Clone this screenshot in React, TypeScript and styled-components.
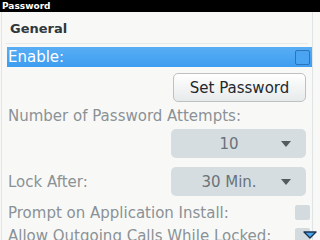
import React from 'react';
import styled, { createGlobalStyle } from 'styled-components';

const GlobalStyle = createGlobalStyle`
  html, body {
    margin: 0;
    padding: 0;
    background: #f8f9f7;
    font-family: "DejaVu Sans", "Noto Sans", sans-serif;
    overflow: hidden;
  }
`;

const Screen = styled.div`
  width: 320px;
  height: 240px;
  display: flex;
  flex-direction: column;
  position: relative;
  overflow: hidden;
`;

const TitleBar = styled.div`
  height: 12px;
  background: #000;
  color: #fff;
  font-weight: bold;
  font-size: 9px;
  line-height: 12px;
  padding-left: 2px;
`;

const Body = styled.div`
  flex: 1;
  display: flex;
`;

const Panel = styled.div`
  flex: 1;
  margin-left: 1px;
  border-left: 1px solid #dfe6e6;
  border-right: 1px solid #dfe4e4;
  display: flex;
  flex-direction: column;
`;

const Gutter = styled.div`
  width: 7px;
`;

const SectionHeader = styled.div`
  height: 32px;
  box-sizing: border-box;
  margin: 0 4px;
  padding: 1px 0 0 4px;
  border-bottom: 1px solid #e6eaea;
  font-weight: bold;
  font-size: 13px;
  color: #30383c;
  display: flex;
  align-items: center;
`;

const Row = styled.div<{ $h: number; $selected?: boolean; $mt?: number; $pr?: number }>`
  flex: none;
  height: ${p => p.$h}px;
  margin-top: ${p => p.$mt ?? 0}px;
  margin-left: 5px;
  padding-left: 1px;
  padding-right: ${p => p.$pr ?? 2}px;
  display: flex;
  align-items: center;
  justify-content: space-between;
  background: ${p => (p.$selected ? 'linear-gradient(#58aef4, #3d9df0)' : 'transparent')};
  color: ${p => (p.$selected ? '#fff' : '#8b9196')};
  font-size: 15px;
  white-space: nowrap;
`;

const RightRow = styled.div<{ $h: number; $mt?: number }>`
  flex: none;
  height: ${p => p.$h}px;
  margin-top: ${p => p.$mt ?? 0}px;
  display: flex;
  justify-content: flex-end;
  padding-right: 6px;
`;

const Check = styled.div<{ $selected?: boolean }>`
  flex: none;
  width: 15px;
  height: 15px;
  border-radius: 2px;
  box-sizing: border-box;
  background: ${p => (p.$selected ? '#4ba4f2' : '#d4dbde')};
  border: ${p => (p.$selected ? '1px solid #2c73b8' : 'none')};
`;

const Button = styled.div`
  width: 133px;
  height: 29px;
  box-sizing: border-box;
  border: 1px solid #bcc2c4;
  border-radius: 5px;
  background: linear-gradient(#ffffff, #e7eaeb);
  color: #1f292e;
  font-size: 15px;
  display: flex;
  align-items: center;
  justify-content: center;
`;

const Select = styled.div`
  width: 135px;
  height: 29px;
  border-radius: 5px;
  background: #d6dde0;
  color: #69737a;
  font-size: 15px;
  display: flex;
  align-items: center;
`;

const SelectValue = styled.span`
  flex: 1;
  text-align: center;
  padding-left: 6px;
`;

const Arrow = styled.span`
  width: 0;
  height: 0;
  border-left: 5px solid transparent;
  border-right: 5px solid transparent;
  border-top: 6px solid #535b60;
  margin-right: 15px;
`;

const ScrollArrow = styled.svg`
  position: absolute;
  left: 303px;
  top: 231px;
`;

const Dropdown = ({ value }: { value: string }) => (
  <Select>
    <SelectValue>{value}</SelectValue>
    <Arrow />
  </Select>
);

export default function App() {
  return (
    <Screen>
      <GlobalStyle />
      <TitleBar>Password</TitleBar>
      <Body>
        <Panel>
          <SectionHeader>General</SectionHeader>
          <Row $h={20} $mt={3} $selected>
            <span>Enable:</span>
            <Check $selected />
          </Row>
          <RightRow $h={29} $mt={6}>
            <Button>Set Password</Button>
          </RightRow>
          <Row $h={20} $mt={4}>
            <span>Number of Password Attempts:</span>
          </Row>
          <RightRow $h={29} $mt={3}>
            <Dropdown value="10" />
          </RightRow>
          <Row $h={29} $mt={9} $pr={6}>
            <span>Lock After:</span>
            <Dropdown value="30 Min." />
          </Row>
          <Row $h={17} $mt={8}>
            <span>Prompt on Application Install:</span>
            <Check />
          </Row>
          <Row $h={17} $mt={6}>
            <span>Allow Outgoing Calls While Locked:</span>
            <Check />
          </Row>
        </Panel>
        <Gutter />
      </Body>
      <ScrollArrow width="14" height="8" viewBox="0 0 14 8">
        <path d="M1 1 L13 1 L7 7 Z" fill="#4aa6ee" stroke="#1c3550" strokeWidth="1.4" strokeLinejoin="round" />
      </ScrollArrow>
    </Screen>
  );
}
